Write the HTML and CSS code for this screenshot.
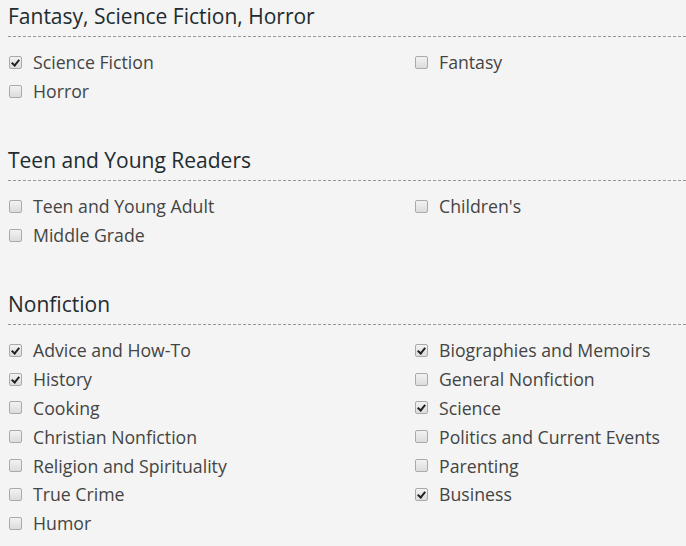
FILE: index.html
```html
<!DOCTYPE html>
<html>
<head>
<meta charset="utf-8">
<link rel="stylesheet" href="styles.css">
</head>
<body>
<div class="page">
  <section class="group">
    <h2 class="group-title">Fantasy, Science Fiction, Horror</h2>
    <div class="options">
      <label class="opt"><span class="box checked"></span>Science Fiction</label>
      <label class="opt"><span class="box"></span>Fantasy</label>
      <label class="opt"><span class="box"></span>Horror</label>
    </div>
  </section>
  <section class="group">
    <h2 class="group-title">Teen and Young Readers</h2>
    <div class="options">
      <label class="opt"><span class="box"></span>Teen and Young Adult</label>
      <label class="opt"><span class="box"></span>Children's</label>
      <label class="opt"><span class="box"></span>Middle Grade</label>
    </div>
  </section>
  <section class="group last">
    <h2 class="group-title">Nonfiction</h2>
    <div class="options">
      <label class="opt"><span class="box checked"></span>Advice and How-To</label>
      <label class="opt"><span class="box checked"></span>Biographies and Memoirs</label>
      <label class="opt"><span class="box checked"></span>History</label>
      <label class="opt"><span class="box"></span>General Nonfiction</label>
      <label class="opt"><span class="box"></span>Cooking</label>
      <label class="opt"><span class="box checked"></span>Science</label>
      <label class="opt"><span class="box"></span>Christian Nonfiction</label>
      <label class="opt"><span class="box"></span>Politics and Current Events</label>
      <label class="opt"><span class="box"></span>Religion and Spirituality</label>
      <label class="opt"><span class="box"></span>Parenting</label>
      <label class="opt"><span class="box"></span>True Crime</label>
      <label class="opt"><span class="box checked"></span>Business</label>
      <label class="opt"><span class="box"></span>Humor</label>
    </div>
  </section>
</div>
</body>
</html>
```
FILE: styles.css
```css
html, body {
  margin: 0;
  padding: 0;
  background: #f3f4f3;
}
body {
  font-family: "Open Sans", sans-serif;
  color: #444;
}
.page {
  padding: 0 0 0 8px;
}
.group {
  height: 144px;
}
.group.last {
  height: auto;
}
.group-title {
  margin: 0;
  padding-top: 2px;
  height: 34px;
  line-height: 28px;
  font-size: 21px;
  font-weight: 400;
  color: #222b30;
  border-bottom: 1px dashed #999;
}
.options {
  display: grid;
  grid-template-columns: 406px 1fr;
  padding-top: 11px;
}
.opt {
  display: flex;
  align-items: center;
  height: 28.8px;
  font-size: 17.7px;
  line-height: 28px;
  color: #444;
  white-space: nowrap;
}
.box {
  width: 11px;
  height: 11px;
  border: 1px solid #aaa;
  border-radius: 2px;
  background: linear-gradient(#f2f2f2, #dcdcdc);
  margin: 0 11px 0 1px;
  position: relative;
  flex: none;
}
.box.checked::after {
  content: "";
  position: absolute;
  left: 3px;
  top: 1px;
  width: 3px;
  height: 6px;
  border: solid #222;
  border-width: 0 2px 2px 0;
  transform: rotate(40deg);
}
```
